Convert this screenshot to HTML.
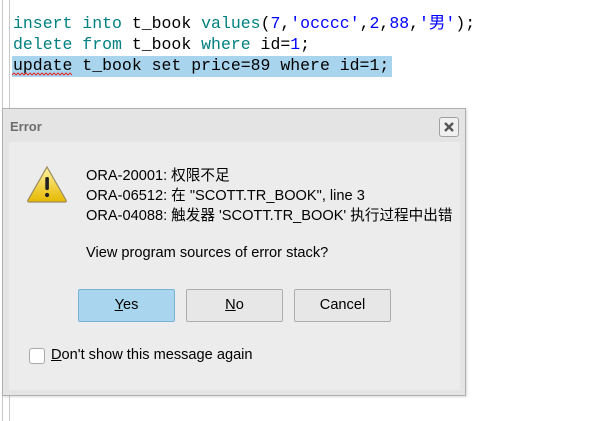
<!DOCTYPE html>
<html><head><meta charset="utf-8"><style>
body{margin:0;width:613px;height:421px;background:#fff;position:relative;overflow:hidden;font-family:"Liberation Sans","Noto Sans CJK SC",sans-serif}
.code{position:absolute;left:13px;font-family:"Liberation Mono","Noto Sans CJK SC",monospace;font-size:16.5px;line-height:21px;white-space:pre;color:#000}
.k{color:#008080}.n{color:#0000ff}
.gut{position:absolute;top:0;height:421px;width:1px;background:#c8c8c8}
.dlg{position:absolute;left:2px;top:108px;width:462px;height:286px;background:#e4e4e4;border:1px solid #b0b0b0;box-shadow:1px 1px 2px rgba(0,0,0,.15)}
.title{position:absolute;left:7px;top:10px;font-size:13px;font-weight:bold;color:#6d6d6d}
.close{position:absolute;left:436px;top:8px;width:18px;height:18px;border:1px solid #a0a0a0;border-radius:3px;background:#f0f0f0}
.panel{position:absolute;left:6px;top:33px;width:451px;height:248px;background:#ececec}
.t{position:absolute;font-size:14.6px;color:#000;white-space:nowrap}
.btn{position:absolute;top:147px;width:95px;height:31px;border:1px solid #adadad;border-radius:2px;background:#e7e7e7;font-size:14.6px;text-align:center;line-height:31px}
</style></head><body>
<div class="gut" style="left:2px"></div><div class="gut" style="left:9px"></div>
<div style="position:absolute;left:12px;top:56px;width:380px;height:21px;background:#a8d4ee"></div>
<div class="code" style="top:13px"><span class="k">insert into</span> t_book <span class="k">values</span>(<span class="n">7</span>,<span class="n">'occcc'</span>,<span class="n">2</span>,<span class="n">88</span>,<span class="n">'男'</span>);</div>
<div class="code" style="top:34px"><span class="k">delete from</span> t_book <span class="k">where</span> id=<span class="n">1</span>;</div>
<div class="code" style="top:55px">update t_book set price=89 where id=1;</div>
<svg style="position:absolute;left:12px;top:72px" width="62" height="5"><path d="M0 3 l2 -2 l2 2 l2 -2 l2 2 l2 -2 l2 2 l2 -2 l2 2 l2 -2 l2 2 l2 -2 l2 2 l2 -2 l2 2 l2 -2 l2 2 l2 -2 l2 2 l2 -2 l2 2 l2 -2 l2 2 l2 -2 l2 2 l2 -2 l2 2 l2 -2 l2 2 l2 -2 l2 2" stroke="#e03030" fill="none" stroke-width="1"/></svg>
<div class="dlg">
<div class="title">Error</div>
<div class="close"><svg width="18" height="18"><path d="M5 5L13 13M13 5L5 13" stroke="#555" stroke-width="2.4"/></svg></div>
<div class="panel">
<svg style="position:absolute;left:17px;top:23px" width="42" height="38"><defs><linearGradient id="g" x1="0" y1="0" x2="0" y2="1"><stop offset="0" stop-color="#fff3a0"/><stop offset="1" stop-color="#e6b800"/></linearGradient></defs><path d="M21 2 L40 35 Q41 37 39 37 L3 37 Q1 37 2 35 Z" fill="url(#g)" stroke="#9a8a60" stroke-width="1.2"/><rect x="19.3" y="12" width="3.6" height="13" rx="1.5" fill="#222"/><circle cx="21.1" cy="30" r="2.1" fill="#222"/></svg>
<div class="t" style="left:77px;top:22px">ORA-20001: 权限不足</div>
<div class="t" style="left:77px;top:42px">ORA-06512: 在 "SCOTT.TR_BOOK", line 3</div>
<div class="t" style="left:77px;top:62px">ORA-04088: 触发器 'SCOTT.TR_BOOK' 执行过程中出错</div>
<div class="t" style="left:77px;top:103px">View program sources of error stack?</div>
<div class="btn" style="left:69px;background:#a9d6ee;border-color:#7ab4d4"><u>Y</u>es</div>
<div class="btn" style="left:177px"><u>N</u>o</div>
<div class="btn" style="left:285px">Cancel</div>
<div style="position:absolute;left:20px;top:206px;width:14px;height:14px;border:1px solid #aaa;border-radius:3px;background:#fff"></div>
<div class="t" style="left:42px;top:205px"><u>D</u>on't show this message again</div>
</div></div>
</body></html>
